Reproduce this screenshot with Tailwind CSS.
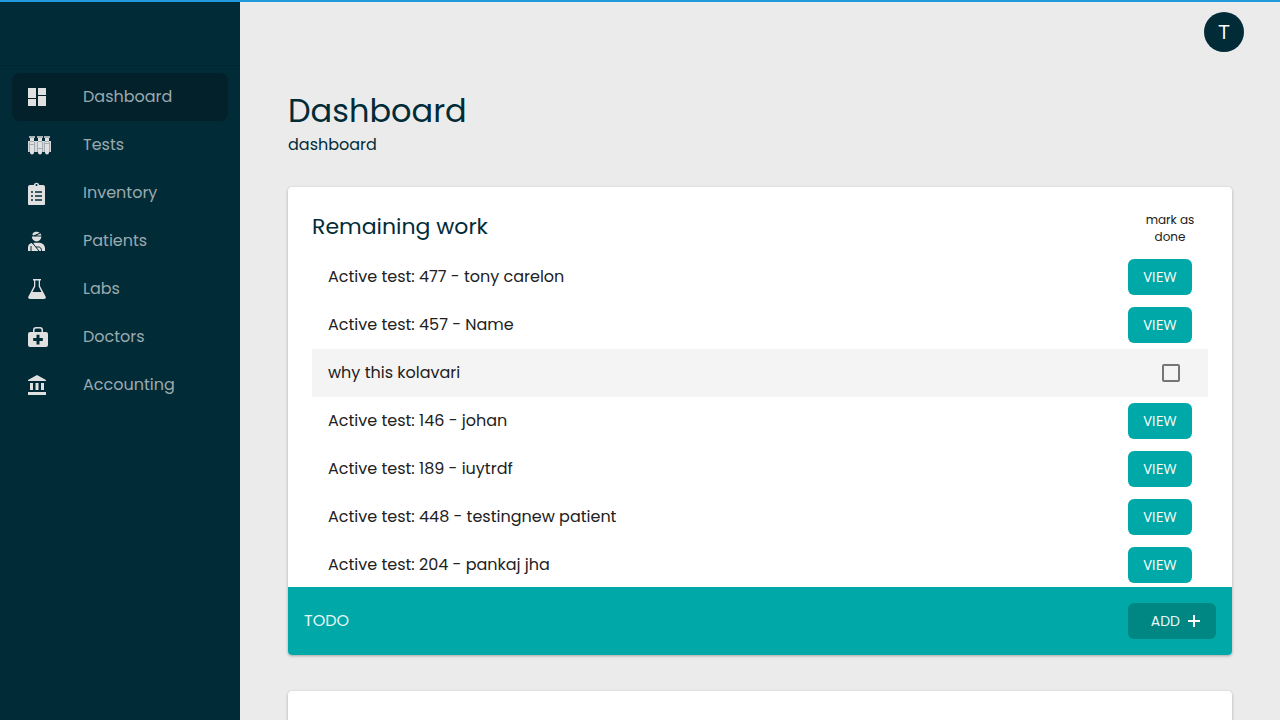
<!DOCTYPE html>
<html lang="en">
<head>
<meta charset="utf-8">
<meta name="viewport" content="width=device-width, initial-scale=1">
<title>Dashboard</title>
<script src="https://cdn.jsdelivr.net/npm/@tailwindcss/browser@4"></script>
</head>
<body class="bg-[#ebebeb] font-['Poppins','Inter',sans-serif] text-base text-[#212121]">
<div class="flex h-screen flex-col overflow-hidden">
  <div class="h-[2px] shrink-0 bg-[#2299dd]"></div>
  <div class="flex min-h-0 flex-1">
    <aside class="flex w-60 shrink-0 flex-col bg-[#022b38]">
      <div class="h-16 border-b border-black/10"></div>
      <nav class="px-3 pt-[7px]">
        <ul class="text-[#9aaaaf]">
          <li><a href="#" class="flex h-12 items-center rounded-lg bg-[#02212b] pl-4">
            <svg class="mr-[31px] size-6 fill-[#e0e0e0]" viewBox="0 0 24 24"><path d="M0 3h8v10H0zM10 3h8v7h-8zM0 14h8v7H0zM10 11h8v10h-8z"/></svg>Dashboard</a></li>
          <li><a href="#" class="flex h-12 items-center rounded-lg pl-4">
            <svg class="mr-[31px] size-6 fill-[#e0e0e0]" viewBox="0 0 24 24"><path fill="#d3d8da" d="M0 8h23v11H0z"/><path d="M2 5h4v14.500a2 2 0 0 1-4 0zM10 5h4v14.500a2 2 0 0 1-4 0zM17 5h4v14.500a2 2 0 0 1-4 0z"/><path fill="#a9b2b6" d="M1 3h6v2H1zM9 3h6v2H9zM16 3h6v2h-6z"/><path fill="#a3afb4" d="M2 8h4v1H2zM10 8h4v1h-4zM17 8h4v1h-4zM2 11h4v1H2zM10 15h4v1h-4zM17 10h4v1h-4zM1 9h1v10H1zM6 9h1v10H6zM9 9h1v10H9zM14 9h1v10h-1zM16 9h1v10h-1zM21 9h1v10h-1z"/></svg>Tests</a></li>
          <li><a href="#" class="flex h-12 items-center rounded-lg pl-4">
            <svg class="mr-[31px] size-6 fill-[#e0e0e0]" viewBox="0 0 24 24"><path fill-rule="evenodd" d="M2 4h3.700a2.900 2.900 0 0 1 5.600 0H15a2 2 0 0 1 2 2v16.500a2 2 0 0 1-2 2H2a2 2 0 0 1-2-2V6a2 2 0 0 1 2-2zm6.500-1a1 1 0 1 0 0 2 1 1 0 0 0 0-2zM4 10a1 1 0 1 0 0 2 1 1 0 0 0 0-2zm3 .3v1.400h7v-1.400zM4 14a1 1 0 1 0 0 2 1 1 0 0 0 0-2zm3 .3v1.400h7v-1.400zM4 18a1 1 0 1 0 0 2 1 1 0 0 0 0-2zm3 .3v1.400h7v-1.400z"/></svg>Inventory</a></li>
          <li><a href="#" class="flex h-12 items-center rounded-lg pl-4">
            <svg class="mr-[31px] size-6 fill-[#e0e0e0]" viewBox="0 0 24 24"><path d="M4.200 5.300a4.900 4.900 0 0 1 7.500-1.500L5.500 6.500zM12.600 4.600l.8 1.900H8.200zM3.800 7.600h9.600a4.800 4.800 0 0 1-9.600 0zM4 14l6 8H0v-3.500A4.600 4.600 0 0 1 4 14zM5.500 13.800h6A5.500 5.500 0 0 1 17 19v3H5z"/><path fill="none" stroke="#022b38" d="m4.500 14 6.500 8M8 18h2.500c2 0 3 1.500 3 4M3 17v5"/></svg>Patients</a></li>
          <li><a href="#" class="flex h-12 items-center rounded-lg pl-4">
            <svg class="mr-[31px] size-6 fill-[#e0e0e0]" viewBox="0 0 24 24"><path fill-rule="evenodd" d="M5 2h8v1.500h-1V9l5.600 10.500A1.700 1.700 0 0 1 16 22H2a1.700 1.700 0 0 1-1.600-2.500L6 9V3.500H5zm2.300 1.500v6L4.500 15h9l-2.800-5.500v-6z"/></svg>Labs</a></li>
          <li><a href="#" class="flex h-12 items-center rounded-lg pl-4">
            <svg class="mr-[31px] size-6 fill-[#e0e0e0]" viewBox="0 0 24 24"><path fill-rule="evenodd" d="M5 7V5a3 3 0 0 1 3-3h4a3 3 0 0 1 3 3v2h3a2 2 0 0 1 2 2v11a2 2 0 0 1-2 2H2a2 2 0 0 1-2-2V9a2 2 0 0 1 2-2zm1.500 0h7V5A1.500 1.500 0 0 0 12 3.500H8A1.500 1.500 0 0 0 6.500 5zm2 2.800v3.300H5.200v3h3.300v3.300h3v-3.300h3.300v-3h-3.300V9.800z"/></svg>Doctors</a></li>
          <li><a href="#" class="flex h-12 items-center rounded-lg pl-4">
            <svg class="mr-[31px] size-6 fill-[#e0e0e0]" viewBox="0 0 24 24"><path d="M9 2l9 5v1H0V7zM2 10h3v7H2zM7.500 10h3v7h-3zM13 10h3v7h-3zM0 19h18v3H0z"/></svg>Accounting</a></li>
        </ul>
      </nav>
    </aside>
    <div class="min-w-0 flex-1">
      <header class="flex justify-end px-9 pt-[10px]">
        <button class="size-10 rounded-full bg-[#022b38] font-['Open_Sans',sans-serif] text-xl text-white">T</button>
      </header>
      <main class="px-12 pt-[39px]">
        <h1 class="text-[32px] leading-10 text-[#022b38]">Dashboard</h1>
        <p class="mt-0.5 leading-6 text-[#022b38]">dashboard</p>
        <section class="mt-[30px] overflow-hidden rounded bg-white shadow-[0_1px_3px_rgba(0,0,0,0.3)]">
          <div class="max-h-[400px] overflow-hidden px-6 pt-6">
            <div class="flex h-[42px] items-start justify-between">
              <h2 class="text-[22px] leading-8 text-[#022b38]">Remaining work</h2>
              <span id="done-label" class="mr-2 w-[60px] text-center text-xs leading-[17px]">mark as done</span>
            </div>
            <ul>
              <li class="flex h-12 items-center justify-between px-4"><span>Active test: 477 - tony carelon</span><button class="h-9 w-16 rounded-md bg-[#00a9a7] font-['Open_Sans',sans-serif] text-sm text-white">VIEW</button></li>
              <li class="flex h-12 items-center justify-between px-4"><span>Active test: 457 - Name</span><button class="h-9 w-16 rounded-md bg-[#00a9a7] font-['Open_Sans',sans-serif] text-sm text-white">VIEW</button></li>
              <li class="flex h-12 items-center justify-between bg-[#f4f4f4] pr-7 pl-4"><label for="task">why this kolavari</label><input id="task" type="checkbox" aria-describedby="done-label" class="size-[18px] appearance-none rounded-xs border-2 border-[#757575] checked:bg-[#00a9a7]"></li>
              <li class="flex h-12 items-center justify-between px-4"><span>Active test: 146 - johan</span><button class="h-9 w-16 rounded-md bg-[#00a9a7] font-['Open_Sans',sans-serif] text-sm text-white">VIEW</button></li>
              <li class="flex h-12 items-center justify-between px-4"><span>Active test: 189 - iuytrdf</span><button class="h-9 w-16 rounded-md bg-[#00a9a7] font-['Open_Sans',sans-serif] text-sm text-white">VIEW</button></li>
              <li class="flex h-12 items-center justify-between px-4"><span>Active test: 448 - testingnew patient</span><button class="h-9 w-16 rounded-md bg-[#00a9a7] font-['Open_Sans',sans-serif] text-sm text-white">VIEW</button></li>
              <li class="flex h-12 items-center justify-between px-4"><span>Active test: 204 - pankaj jha</span><button class="h-9 w-16 rounded-md bg-[#00a9a7] font-['Open_Sans',sans-serif] text-sm text-white">VIEW</button></li>
            </ul>
          </div>
          <div class="flex items-center justify-between bg-[#00a9a7] p-4 text-[#e6f6f6]">
            <span>TODO</span>
            <button class="flex h-9 w-[88px] items-center justify-end gap-2 rounded-md bg-[#008783] pr-4 text-sm">ADD
              <svg class="size-3 fill-white" viewBox="0 0 12 12"><path d="M5 0h2v5h5v2H7v5H5V7H0V5h5z"/></svg></button>
          </div>
        </section>
        <section class="mt-9 h-24 rounded bg-white shadow-[0_1px_3px_rgba(0,0,0,0.3)]"></section>
      </main>
    </div>
  </div>
</div>
</body>
</html>
